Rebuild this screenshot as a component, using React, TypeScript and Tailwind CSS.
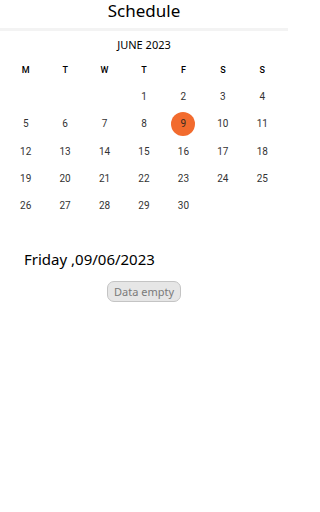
const WEEKDAYS = ["M", "T", "W", "T", "F", "S", "S"];

// June 2023 starts on a Thursday
const CELLS: (number | null)[] = [null, null, null, ...Array.from({ length: 30 }, (_, i) => i + 1)];
const SELECTED = 9;

export default function App() {
  const rows: (number | null)[][] = [];
  for (let i = 0; i < CELLS.length; i += 7) rows.push(CELLS.slice(i, i + 7));

  return (
    <div className="min-h-[512px] w-[288px] bg-white" style={{ fontFamily: '"Noto Sans", sans-serif' }}>
      {/* Header */}
      <div className="flex h-[31px] items-start justify-center border-b-[3px] border-[#f3f3f3]">
        <h1 className="text-[17px] leading-[21px] text-black">Schedule</h1>
      </div>

      {/* Calendar */}
      <div className="px-[6px] pt-[7px]" style={{ fontFamily: "Roboto, sans-serif" }}>
        <p
          className="text-center text-[11px] leading-[14px] text-black"
          style={{ fontFamily: '"Noto Sans", sans-serif' }}
        >
          JUNE 2023
        </p>
        <div className="mt-[12px] grid grid-cols-7">
          {WEEKDAYS.map((d, i) => (
            <div key={i} className="flex h-[14px] items-center justify-center text-[9px] font-medium text-black">
              {d}
            </div>
          ))}
        </div>
        <div className="mt-[5px]">
          {rows.map((row, r) => (
            <div key={r} className="grid h-[27.3px] grid-cols-7">
              {row.map((day, c) => (
                <div key={c} className="flex items-center justify-center">
                  {day === SELECTED ? (
                    <span className="flex h-[24px] w-[24px] items-center justify-center rounded-full bg-[#f26b2e] text-[10px] text-[#3a2a20]">
                      {day}
                    </span>
                  ) : (
                    <span className="text-[10px] text-[#333]">{day}</span>
                  )}
                </div>
              ))}
            </div>
          ))}
        </div>
      </div>

      {/* Selected day */}
      <div className="mt-[30px] px-[24px]">
        <p className="text-[15px] leading-[20px] text-black">Friday ,09/06/2023</p>
      </div>
      <div className="mt-[12px] flex justify-center">
        <span className="rounded-[7px] border border-[#c4c4c4] bg-[#e6e6e6] px-[6px] py-[2px] text-[11px] leading-[15px] text-[#7a7a7a]">
          Data empty
        </span>
      </div>
    </div>
  );
}
